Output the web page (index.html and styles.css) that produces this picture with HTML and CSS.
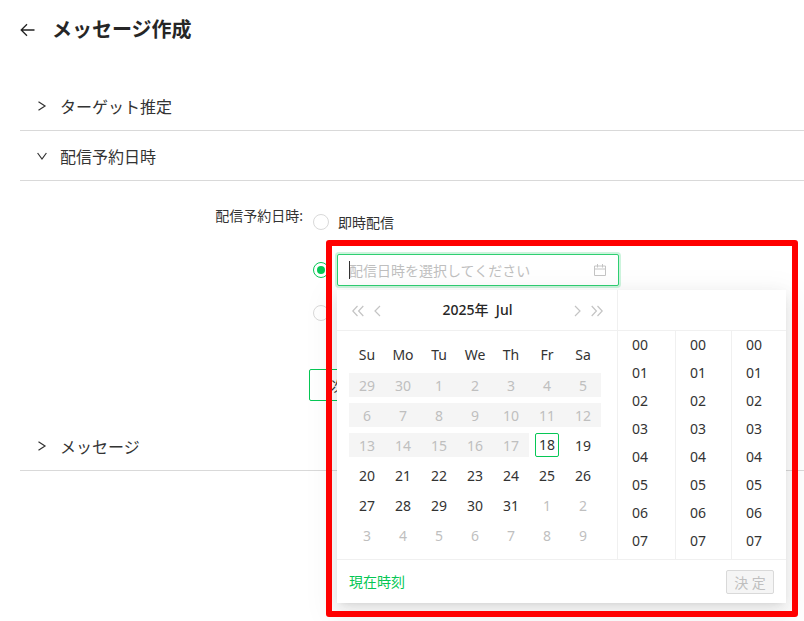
FILE: index.html
```html
<!DOCTYPE html>
<html lang="ja">
<head>
<meta charset="utf-8">
<title>メッセージ作成</title>
<link rel="stylesheet" href="styles.css">
</head>
<body>
<div class="page">
  <header class="head">
    <svg class="back" width="15" height="14" viewBox="0 0 15 14"><path d="M14.5 7H1.2M7 1.2 1.2 7 7 12.8" fill="none" stroke="#222" stroke-width="1.3"/></svg>
    <h1 class="title">メッセージ作成</h1>
  </header>
  <section class="row row-first">
    <svg class="chev" width="10" height="10" viewBox="0 0 10 10"><path d="M1.5 .8 8 5 1.5 9.2" fill="none" stroke="#333" stroke-width="1.2"/></svg>
    <span>ターゲット推定</span>
  </section>
  <section class="row">
    <svg class="chev" width="10" height="10" viewBox="0 0 10 10"><path d="M.6 2 5 8 9.4 2" fill="none" stroke="#333" stroke-width="1.2"/></svg>
    <span>配信予約日時</span>
  </section>
  <div class="form">
    <div class="label">配信予約日時:</div>
    <div class="options">
      <div class="opt opt-now"><span class="radio"></span><span>即時配信</span></div>
      <div class="opt opt-date">
        <span class="radio radio-on"></span>
        <div class="input">
          <span class="caret"></span>
          <span class="placeholder">配信日時を選択してください</span>
          <svg width="12" height="12" viewBox="0 0 12 12"><path d="M.5 2h11v9.500H.5zM.5 5h11M3.500 0v3.500M8.500 0v3.500" fill="none" stroke="#c4c4c4"/></svg>
        </div>
      </div>
      <div class="opt opt-later"><span class="radio"></span></div>
      <button class="next">次へ</button>
    </div>
  </div>
  <section class="row">
    <svg class="chev" width="10" height="10" viewBox="0 0 10 10"><path d="M1.5 .8 8 5 1.5 9.2" fill="none" stroke="#333" stroke-width="1.2"/></svg>
    <span>メッセージ</span>
  </section>
</div>

<div class="picker">
  <div class="picker-main">
    <div class="cal">
      <div class="cal-head">
        <div class="nav">
          <svg width="12" height="12" viewBox="0 0 12 12"><path d="M5.500 1 .8 6l4.700 5M11.300 1 6.600 6l4.700 5" fill="none" stroke="#c4c4c4" stroke-width="1.2"/></svg>
          <svg width="7" height="12" viewBox="0 0 7 12"><path d="M6 1 1 6l5 5" fill="none" stroke="#c4c4c4" stroke-width="1.2"/></svg>
        </div>
        <div class="month">2025年&nbsp;&nbsp;Jul</div>
        <div class="nav nav-right">
          <svg width="7" height="12" viewBox="0 0 7 12"><path d="m1 1 5 5-5 5" fill="none" stroke="#c4c4c4" stroke-width="1.2"/></svg>
          <svg width="12" height="12" viewBox="0 0 12 12"><path d="m.7 1 4.700 5-4.700 5M6.500 1l4.700 5-4.700 5" fill="none" stroke="#c4c4c4" stroke-width="1.2"/></svg>
        </div>
      </div>
      <div class="grid">
        <div class="dow">Su</div><div class="dow">Mo</div><div class="dow">Tu</div><div class="dow">We</div><div class="dow">Th</div><div class="dow">Fr</div><div class="dow">Sa</div>
        <div class="d off">29</div><div class="d off">30</div><div class="d off">1</div><div class="d off">2</div><div class="d off">3</div><div class="d off">4</div><div class="d off">5</div>
        <div class="d off">6</div><div class="d off">7</div><div class="d off">8</div><div class="d off">9</div><div class="d off">10</div><div class="d off">11</div><div class="d off">12</div>
        <div class="d off">13</div><div class="d off">14</div><div class="d off">15</div><div class="d off">16</div><div class="d off">17</div><div class="d"><span class="today">18</span></div><div class="d">19</div>
        <div class="d">20</div><div class="d">21</div><div class="d">22</div><div class="d">23</div><div class="d">24</div><div class="d">25</div><div class="d">26</div>
        <div class="d">27</div><div class="d">28</div><div class="d">29</div><div class="d">30</div><div class="d">31</div><div class="d out">1</div><div class="d out">2</div>
        <div class="d out">3</div><div class="d out">4</div><div class="d out">5</div><div class="d out">6</div><div class="d out">7</div><div class="d out">8</div><div class="d out">9</div>
      </div>
    </div>
    <div class="time">
      <div class="time-head"></div>
      <div class="cols">
        <ul class="col col-h"><li>00</li><li>01</li><li>02</li><li>03</li><li>04</li><li>05</li><li>06</li><li>07</li></ul>
        <ul class="col col-m"><li>00</li><li>01</li><li>02</li><li>03</li><li>04</li><li>05</li><li>06</li><li>07</li></ul>
        <ul class="col col-s"><li>00</li><li>01</li><li>02</li><li>03</li><li>04</li><li>05</li><li>06</li><li>07</li></ul>
      </div>
    </div>
  </div>
  <div class="foot">
    <span class="now">現在時刻</span>
    <button class="ok" disabled>決 定</button>
  </div>
</div>
<div class="mark"></div>
</body>
</html>
```
FILE: styles.css
```css
* { box-sizing: border-box; }
html, body { margin: 0; height: 100%; overflow: hidden; background: #fff; }
body { position: relative; font-family: "Noto Sans", "Noto Sans CJK JP", sans-serif; font-size: 14px; color: #333; }
.page { padding-left: 20px; }
.head { display: flex; align-items: center; gap: 17px; height: 59px; padding-top: 1px; }
.title { margin: 0; font-size: 20px; font-weight: 700; color: #262626; line-height: 28px; }
.row { display: flex; align-items: center; height: 50px; border-bottom: 1px solid #d9d9d9; font-size: 16px; color: #333; padding-left: 17px; gap: 13px; }
.row-first { margin-top: 22px; }
.form { height: 240px; display: flex; }
.label { width: 283px; text-align: right; padding-top: 25px; font-size: 14px; line-height: 20px; color: #333; }
.options { display: flex; flex-direction: column; align-items: flex-start; }
.opt { display: flex; align-items: center; gap: 9px; }
.opt-now { margin: 31px 0 0 10px; height: 20px; font-size: 14px; }
.opt-date { margin: 22px 0 0 10px; height: 32px; gap: 8px; }
.opt-later { margin: 15px 0 0 10px; height: 24px; }
.radio { width: 16px; height: 16px; border-radius: 50%; border: 1px solid #d9d9d9; background: #fff; flex: none; position: relative; }
.radio-on { border-color: #06c755; }
.radio-on::after { content: ""; position: absolute; inset: 3px; border-radius: 50%; background: #06c755; }
.input { position: relative; display: flex; align-items: center; justify-content: space-between; width: 282px; height: 32px; padding: 0 12px 0 11px; border: 1px solid #2fcf72; border-radius: 2px; box-shadow: 0 0 0 2px rgba(6, 199, 85, .2); background: #fff; }
.placeholder { color: #bfbfbf; font-size: 14px; }
.caret { position: absolute; left: 11px; top: 6px; width: 1px; height: 18px; background: #333; }
.next { margin: 44px 0 0 6px; width: 80px; height: 32px; border: 1px solid #06c755; border-radius: 2px; background: #fff; font: inherit; color: #333; padding: 0 0 0 21px; text-align: left; }
.picker { position: absolute; left: 337px; top: 290px; width: 449px; height: 313px; background: #fff; box-shadow: 0 3px 6px -4px rgba(0,0,0,.12), 0 6px 16px rgba(0,0,0,.08), 0 9px 28px 8px rgba(0,0,0,.05); display: flex; flex-direction: column; }
.picker-main { display: flex; flex: 1; border-bottom: 1px solid #f0f0f0; }
.cal { width: 281px; border-right: 1px solid #f0f0f0; }
.cal-head { height: 41px; border-bottom: 1px solid #f0f0f0; display: flex; align-items: center; justify-content: space-between; padding: 0 14px 0 15px; }
.nav { display: flex; gap: 10px; align-items: center; width: 29px; padding-top: 2px; }
.nav-right { gap: 10px; }
.month { font-weight: 500; color: #262626; font-size: 14px; padding-bottom: 2px; }
.grid { display: grid; grid-template-columns: repeat(7, 36px); grid-auto-rows: 30px; padding: 9px 12px 0; }
.dow, .d { display: flex; align-items: center; justify-content: center; height: 24px; margin: 3px 0; color: #333; }
.dow { height: 30px; margin: 0; padding-bottom: 2px; }
.off { background: #f5f5f5; color: #bfbfbf; }
.out { color: #bfbfbf; }
.today { display: block; width: 24px; height: 24px; line-height: 22px; text-align: center; border: 1px solid #06c755; border-radius: 2px; }
.time { flex: 1; display: flex; flex-direction: column; }
.time-head { height: 41px; border-bottom: 1px solid #f0f0f0; }
.cols { display: flex; flex: 1; }
.col { list-style: none; margin: 0; padding: 0 0 0 14px; border-left: 1px solid #f0f0f0; }
.col-h { width: 57px; border-left: 0; }
.col-m { width: 56px; }
.col-s { width: 55px; }
.col li { height: 28px; line-height: 28px; color: #333; }
.foot { display: flex; align-items: center; justify-content: space-between; height: 43px; padding: 0 12px; }
.now { color: #06c755; font-size: 14px; padding-bottom: 1px; }
.ok { width: 48px; height: 24px; padding: 0; background: #f5f5f5; border: 1px solid #d9d9d9; border-radius: 2px; color: #bfbfbf; font: inherit; }
.mark { position: absolute; left: 326px; top: 240px; width: 472px; height: 377px; border: 6px solid #f00; border-radius: 3px; }
```
